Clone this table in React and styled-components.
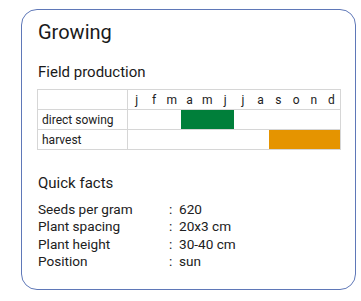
import styled, { createGlobalStyle } from "styled-components";

const GlobalStyle = createGlobalStyle`
  body {
    margin: 0;
    background: #ffffff;
    font-family: Roboto, "Liberation Sans", sans-serif;
    color: #212121;
  }
`;

const Page = styled.div`
  padding: 9px 5px 12px 21px;
`;

const Card = styled.section`
  width: 335px;
  box-sizing: border-box;
  border: 1px solid #5f78b8;
  border-radius: 16px;
  padding: 10px 14px 19px 15px;
`;

const Title = styled.h2`
  margin: 0;
  font-size: 20px;
  line-height: 24px;
  font-weight: 400;
  color: #1a1a1a;
  padding-left: 1px;
`;

const SubTitle = styled.h3`
  margin: ${(p) => p.$top}px 0 0;
  font-size: 15px;
  line-height: 18px;
  font-weight: 400;
  color: #1a1a1a;
  padding-left: 1px;
`;

const Table = styled.table`
  margin-top: 8px;
  width: 304px;
  border-collapse: collapse;
  table-layout: fixed;
  font-size: 12px;
`;

const Cell = styled.td`
  border: 1px solid #d6d6d6;
  height: 20px;
  padding: 0;
  box-sizing: border-box;
`;

const LabelCell = styled(Cell)`
  width: 90px;
  padding-left: 4px;
`;

const MonthCell = styled(Cell)`
  text-align: center;
  border-left: none;
  border-right: none;
  &:last-child {
    border-right: 1px solid #d6d6d6;
  }
`;

const BarCell = styled(Cell)`
  padding: 0;
  position: relative;
`;

const Bar = styled.div`
  position: absolute;
  top: 0;
  bottom: 0;
  background: ${(p) => p.$color};
`;

const Facts = styled.dl`
  margin: 9px 0 0;
  display: grid;
  grid-template-columns: 131px 10px auto;
  font-size: 13.6px;
  line-height: 17.33px;
  padding-left: 1px;
`;

const Term = styled.dt`
  margin: 0;
`;

const Colon = styled.span``;

const Value = styled.dd`
  margin: 0;
`;

const months = ["j", "f", "m", "a", "m", "j", "j", "a", "s", "o", "n", "d"];

const rows = [
  { name: "direct sowing", from: 3, to: 6, color: "#007f3a" },
  { name: "harvest", from: 8, to: 12, color: "#e59400" },
];

const facts = [
  ["Seeds per gram", "620"],
  ["Plant spacing", "20x3 cm"],
  ["Plant height", "30-40 cm"],
  ["Position", "sun"],
];

export default function App() {
  return (
    <>
      <GlobalStyle />
      <Page>
        <Card>
          <Title>Growing</Title>
          <SubTitle $top={19}>Field production</SubTitle>
          <Table>
            <tbody>
              <tr>
                <LabelCell />
                {months.map((m, i) => (
                  <MonthCell key={i}>{m}</MonthCell>
                ))}
              </tr>
              {rows.map((r) => (
                <tr key={r.name}>
                  <LabelCell>{r.name}</LabelCell>
                  <BarCell colSpan={12}>
                    <Bar
                      $color={r.color}
                      style={{
                        left: `${(r.from / 12) * 100}%`,
                        width: `${((r.to - r.from) / 12) * 100}%`,
                      }}
                    />
                  </BarCell>
                </tr>
              ))}
            </tbody>
          </Table>
          <SubTitle $top={24}>Quick facts</SubTitle>
          <Facts>
            {facts.map(([k, v]) => (
              <>
                <Term key={k}>{k}</Term>
                <Colon>:</Colon>
                <Value>{v}</Value>
              </>
            ))}
          </Facts>
        </Card>
      </Page>
    </>
  );
}
